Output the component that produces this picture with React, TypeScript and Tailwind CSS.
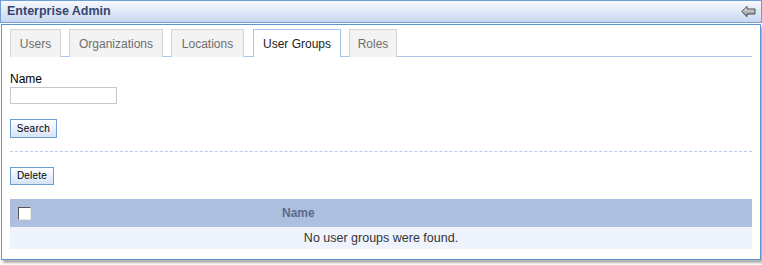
import React from "react";

const tabs = [
  { label: "Users", w: "w-[51px]", active: false },
  { label: "Organizations", w: "w-[94px]", active: false },
  { label: "Locations", w: "w-[73px]", active: false },
  { label: "User Groups", w: "w-[88px]", active: true },
  { label: "Roles", w: "w-[48px]", active: false },
];

function BackArrow() {
  return (
    <svg width="15" height="13" viewBox="0 0 15 13">
      <defs>
        <linearGradient id="ag" x1="0" y1="0" x2="0" y2="1">
          <stop offset="0" stopColor="#f4f4f4" />
          <stop offset="0.5" stopColor="#b9b9b9" />
          <stop offset="1" stopColor="#8a8a8a" />
        </linearGradient>
      </defs>
      <path
        d="M0.8 6.5 L6 1.3 L6 4 L14 4 L14 9 L6 9 L6 11.7 Z"
        fill="url(#ag)"
        stroke="#4a4a4a"
        strokeWidth="1"
        strokeLinejoin="miter"
      />
    </svg>
  );
}

export default function App() {
  return (
    <div
      className="w-[762px] h-[265px] bg-white relative"
      style={{ fontFamily: '"Liberation Sans", Arial, sans-serif' }}
    >
      {/* Title bar */}
      <div className="w-[762px] h-[23px] border border-[#6f9fd5] bg-gradient-to-b from-[#f6f9fe] to-[#c7d8f0] flex items-center justify-between pl-[6px] pr-[5px]">
        <span className="text-[12.5px] font-bold text-[#38466f] leading-none">
          Enterprise Admin
        </span>
        <BackArrow />
      </div>

      {/* Content panel */}
      <div className="ml-px mt-px w-[760px] h-[236px] border border-[#5f94cf] bg-white shadow-[2px_3px_2px_rgba(90,80,80,0.45)] pt-[4px] px-[8px]">
        {/* Tabs */}
        <div className="flex gap-[8px] border-b border-[#a9c6ea] w-[742px] h-[28px]">
          {tabs.map((t) => (
            <div
              key={t.label}
              className={
                t.active
                  ? `${t.w} h-[28px] border border-b-0 border-[#a9c6ea] bg-white text-[#222] flex items-center justify-center text-[12px] relative -mb-px ml-px`
                  : `${t.w} h-[28px] border border-b-0 border-[#d3d3d3] bg-[#f3f3f3] text-[#6e6e6e] flex items-center justify-center text-[12px]`
              }
            >
              {t.label}
            </div>
          ))}
        </div>

        {/* Form */}
        <div className="pt-[15px]">
          <div className="text-[12px] leading-[14px] text-black">Name</div>
          <input
            type="text"
            className="block mt-px w-[107px] h-[17px] border border-[#c8c8c8] bg-white outline-none"
          />
          <button className="block mt-[15px] w-[47px] h-[19px] border border-[#6c9dd4] bg-gradient-to-b from-white to-[#d5e3f6] text-[10px] text-black leading-none tracking-[0.3px]">
            Search
          </button>
        </div>

        <div className="mt-[13px] border-t border-dashed border-[#b7cbe5] w-[742px]" />

        <button className="block mt-[15px] w-[44px] h-[18px] border border-[#6c9dd4] bg-gradient-to-b from-white to-[#d5e3f6] text-[10px] text-black leading-none tracking-[0.2px]">
          Delete
        </button>

        {/* Table */}
        <div className="mt-[14px] w-[742px]">
          <div className="h-[28px] bg-[#adbfdf] flex items-center">
            <div className="ml-[8px] w-[13px] h-[13px] border border-t-[#555] border-l-[#555] border-b-[#e8e8e8] border-r-[#e8e8e8] bg-white" />
            <div className="ml-[251px] text-[12px] font-bold text-[#5b6a8c]">
              Name
            </div>
          </div>
          <div className="h-[22px] bg-[#eef3fe] flex items-center justify-center text-[12.5px] text-[#333]">
            No user groups were found.
          </div>
        </div>
      </div>
    </div>
  );
}
